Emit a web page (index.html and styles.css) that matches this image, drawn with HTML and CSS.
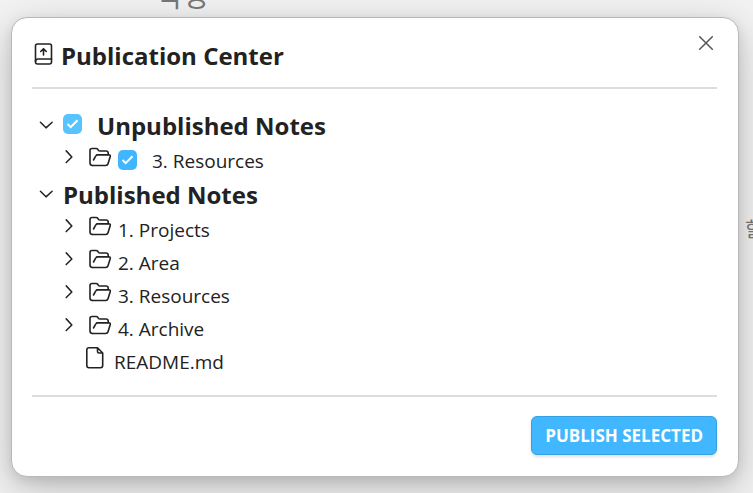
FILE: index.html
```html
<!DOCTYPE html>
<html lang="en">
<head>
    <meta charset="UTF-8">
    <meta name="viewport" content="width=device-width, initial-scale=1.0">
    <title>Publication Center</title>
    <link rel="stylesheet" href="styles.css">
</head>
<body>
    <!-- Shared icons -->
    <svg class="icon-defs" aria-hidden="true">
        <symbol id="icon-chevron" viewBox="0 0 16 16">
            <path d="M4.500 2 10.500 8.500l-6 6"/>
        </symbol>
        <symbol id="icon-folder" viewBox="0 0 24 20">
            <path d="M4.500 18.500C2.500 18.500 2 17.500 2 16V3.500C2 2 2.800 1.500 4 1.500h4.200c.8 0 1.300.4 1.700 1l.7 1c.3.4.7.500 1.200.500H18c1.500 0 2.200.8 2.200 2.200v1.500"/>
            <path d="M4.500 18.500h13.200c1.200 0 2-.5 2.300-1.700l2.200-7c.4-1.300-.2-2.100-1.500-2.100H10c-1.300 0-2 .5-2.500 1.600L5.500 13"/>
            <path d="M9 7.700h11"/>
        </symbol>
    </svg>

    <span class="page-text page-text-top" lang="ko">작성</span>
    <span class="page-text page-text-side" lang="ko">할</span>

    <div class="modal" role="dialog" aria-labelledby="modal-title">
        <button class="modal-close" aria-label="Close">
            <svg viewBox="0 0 14 14"><path d="M.7.7l12.600 12.600M13.300.7L.7 13.300"/></svg>
        </button>

        <header class="modal-header">
            <svg class="title-icon" viewBox="0 0 18 22">
                <rect x="1" y="1" width="16" height="20" rx="2"/>
                <path d="M1 18.500C1 17 2 16 3.500 16H17M9 12V6M6.200 8.500 9 5.700l2.800 2.800"/>
            </svg>
            <h1 id="modal-title">Publication Center</h1>
        </header>

        <div class="modal-body">
            <div class="group-row">
                <button class="toggle open" aria-label="Toggle unpublished notes"><svg><use href="#icon-chevron"/></svg></button>
                <input type="checkbox" id="unpublished" class="faded" checked>
                <label for="unpublished">Unpublished Notes</label>
            </div>
            <ul class="tree">
                <li class="tree-row">
                    <button class="toggle" aria-label="Expand 3. Resources"><svg><use href="#icon-chevron"/></svg></button>
                    <svg class="folder-icon"><use href="#icon-folder"/></svg>
                    <input type="checkbox" id="resources" checked>
                    <label for="resources">3. Resources</label>
                </li>
            </ul>

            <div class="group-row">
                <button class="toggle open" aria-label="Toggle published notes"><svg><use href="#icon-chevron"/></svg></button>
                <span>Published Notes</span>
            </div>
            <ul class="tree">
                <li class="tree-row">
                    <button class="toggle" aria-label="Expand 1. Projects"><svg><use href="#icon-chevron"/></svg></button>
                    <svg class="folder-icon"><use href="#icon-folder"/></svg>
                    <span>1. Projects</span>
                </li>
                <li class="tree-row">
                    <button class="toggle" aria-label="Expand 2. Area"><svg><use href="#icon-chevron"/></svg></button>
                    <svg class="folder-icon"><use href="#icon-folder"/></svg>
                    <span>2. Area</span>
                </li>
                <li class="tree-row">
                    <button class="toggle" aria-label="Expand 3. Resources"><svg><use href="#icon-chevron"/></svg></button>
                    <svg class="folder-icon"><use href="#icon-folder"/></svg>
                    <span>3. Resources</span>
                </li>
                <li class="tree-row">
                    <button class="toggle" aria-label="Expand 4. Archive"><svg><use href="#icon-chevron"/></svg></button>
                    <svg class="folder-icon"><use href="#icon-folder"/></svg>
                    <span>4. Archive</span>
                </li>
                <li class="tree-row file-row">
                    <svg class="file-icon" viewBox="0 0 20 24">
                        <path d="M12.500 1.800H4C2.600 1.800 1.800 2.600 1.800 4v15.500c0 1.400.8 2.200 2.200 2.200h11.500c1.400 0 2.200-.8 2.200-2.200V7zM12.500 1.800V5.500c0 1 .5 1.500 1.500 1.500h3.700"/>
                    </svg>
                    <span>README.md</span>
                </li>
            </ul>
        </div>

        <footer class="modal-footer">
            <button class="btn-publish">PUBLISH SELECTED</button>
        </footer>
    </div>
</body>
</html>
```
FILE: styles.css
```css
* {
    box-sizing: border-box;
}

body {
    margin: 0;
    min-height: 100vh;
    padding: 17px 14px 16px 11px;
    overflow: hidden;
    position: relative;
    background-color: #f2f2f2;
    color: #222;
    font-family: "Open Sans", "Noto Sans CJK KR", sans-serif;
}

svg {
    fill: none;
    stroke: #222;
    stroke-width: 1.6;
    stroke-linecap: round;
    stroke-linejoin: round;
    flex: none;
}

button {
    font-family: inherit;
    cursor: pointer;
}

.icon-defs {
    position: absolute;
    width: 0;
    height: 0;
}

/* Page content behind the dialog */
.page-text {
    position: absolute;
    color: #777;
    white-space: nowrap;
    line-height: 1;
}

.page-text-top {
    top: -18px;
    left: 157px;
    font-size: 28px;
}

.page-text-side {
    top: 220px;
    left: 745px;
    font-size: 20px;
}

.modal {
    position: relative;
    padding: 0 21px 21px 20px;
    background-color: #fff;
    border: 1px solid #b8b8b8;
    border-radius: 16px;
    box-shadow: 0 4px 12px rgba(0, 0, 0, 0.1), 0 12px 40px rgba(0, 0, 0, 0.22);
}

.modal-close {
    position: absolute;
    top: 14px;
    right: 21px;
    padding: 4px;
    border: 0;
    background: none;
}

.modal-close svg {
    display: block;
    width: 14px;
    height: 14px;
    stroke: #555;
    stroke-width: 1.5;
}

.modal-header {
    display: flex;
    align-items: center;
    gap: 8px;
    padding: 19px 2px 12px;
    border-bottom: 2px solid #ddd;
}

.title-icon {
    width: 19px;
    height: 22px;
    margin-bottom: 5px;
}

h1 {
    margin: 0;
    font-size: 24px;
    line-height: 38px;
    font-weight: 700;
}

.modal-body {
    padding: 18px 0 18px 7px;
    border-bottom: 2px solid #ddd;
}

.group-row {
    display: flex;
    align-items: center;
    gap: 9px;
    height: 36px;
    font-size: 24px;
    font-weight: 700;
}

.tree {
    margin: 0;
    padding: 0 0 0 23px;
    list-style: none;
}

.tree-row {
    display: flex;
    align-items: center;
    height: 33px;
    padding-top: 3px;
    font-size: 19px;
}

.toggle {
    padding: 0;
    border: 0;
    background: none;
}

.toggle svg {
    display: block;
    width: 15px;
    height: 15px;
}

.toggle.open svg {
    transform: rotate(90deg);
}

.tree-row .toggle {
    margin-bottom: 9px;
}

.folder-icon {
    width: 24px;
    height: 20px;
    margin: 0 6px 9px 11px;
}

.file-row {
    padding-left: 23px;
}

.file-icon {
    width: 20px;
    height: 24px;
    margin: 0 9px 9px 0;
}

input[type="checkbox"] {
    appearance: none;
    flex: none;
    width: 19px;
    height: 20px;
    margin: 0 0 3px;
    border-radius: 5px;
    border: 1px solid #bbb;
}

input[type="checkbox"]:checked {
    border: 0;
    background: #3fb6ff url("data:image/svg+xml,%3Csvg xmlns='http://www.w3.org/2000/svg' viewBox='0 0 19 19'%3E%3Cpath d='M4.500 10l3.200 3.200 6.800-7' fill='none' stroke='white' stroke-width='2'/%3E%3C/svg%3E") center / 19px no-repeat;
}

input.faded:checked {
    background-color: #58c4ff;
}

input[type="checkbox"] + label {
    margin-left: 15px;
}

.group-row input[type="checkbox"] + label {
    margin-left: 6px;
}

.modal-footer {
    display: flex;
    justify-content: flex-end;
    padding-top: 19px;
}

.btn-publish {
    height: 39px;
    padding: 0 13px;
    border: 1px solid #35a0e2;
    border-radius: 6px;
    background-color: #40b7ff;
    color: #fff;
    font-size: 17px;
    font-weight: 700;
    box-shadow: 0 2px 3px rgba(0, 0, 0, 0.12);
}
```
